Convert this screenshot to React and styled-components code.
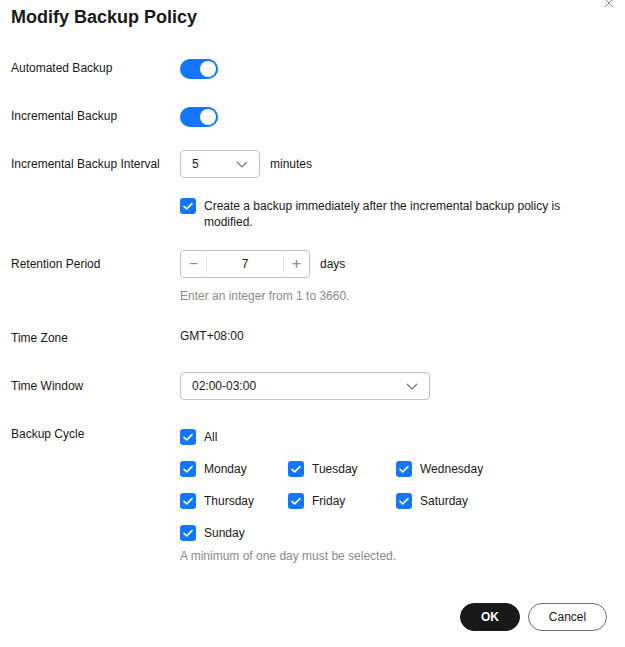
import React, { useState } from 'react';
import styled, { createGlobalStyle } from 'styled-components';

const GlobalStyle = createGlobalStyle`
  * { box-sizing: border-box; }
  body {
    margin: 0;
    background: #fff;
    font-family: "Liberation Sans", Arial, sans-serif;
    color: #191919;
  }
`;

const Dialog = styled.div`
  position: relative;
  width: 625px;
  height: 647px;
  padding: 5px 18px 0 11px;
  background: #fff;
  overflow: hidden;
`;

const Title = styled.h2`
  margin: 0;
  font-size: 18px;
  line-height: 24px;
  font-weight: 700;
  color: #191919;
`;

const Close = styled.button`
  position: absolute;
  top: -3px;
  right: 10px;
  width: 12px;
  height: 12px;
  padding: 0;
  border: 0;
  background: none;
  color: #8a8a8a;
  display: flex;
`;

const Form = styled.div`
  display: flex;
  flex-direction: column;
`;

const Row = styled.div`
  display: flex;
  align-items: flex-start;
  margin-top: ${({ $mt }) => $mt}px;
`;

const Label = styled.div`
  width: 169px;
  flex-shrink: 0;
  font-size: 12px;
  line-height: ${({ $lh }) => $lh || 28}px;
  color: #191919;
`;

const Control = styled.div`
  display: flex;
  flex-direction: column;
  align-items: flex-start;
`;

const Inline = styled.div`
  display: flex;
  align-items: center;
  gap: 10px;
  min-height: 28px;
  font-size: 12px;
`;

const Value = styled.span`
  font-size: 12px;
  line-height: 28px;
  margin-top: -2px;
`;

const Hint = styled.div`
  font-size: 12px;
  line-height: 18px;
  color: #8a8a8a;
  margin-top: ${({ $mt }) => $mt}px;
`;

const SwitchTrack = styled.button`
  position: relative;
  width: 38px;
  height: 20px;
  margin-top: 5px;
  padding: 0;
  border: 0;
  border-radius: 10px;
  background: ${({ $on }) => ($on ? '#1476ff' : '#c2c2c2')};
  cursor: pointer;

  &::after {
    content: '';
    position: absolute;
    top: 2px;
    left: ${({ $on }) => ($on ? '20px' : '2px')};
    width: 16px;
    height: 16px;
    border-radius: 50%;
    background: #fff;
  }
`;

const SelectBox = styled.div`
  display: flex;
  align-items: center;
  justify-content: space-between;
  width: ${({ $w }) => $w}px;
  height: 28px;
  padding: 0 11px 0 11px;
  border: 1px solid #c2c2c2;
  border-radius: 4px;
  font-size: 12px;
  color: #191919;
  background: #fff;
`;

const Chevron = () => (
  <svg width="12" height="7" viewBox="0 0 12 7" fill="none">
    <path d="M1 1l5 5 5-5" stroke="#6e6e6e" strokeWidth="1.1" />
  </svg>
);

const Stepper = styled.div`
  display: flex;
  align-items: center;
  width: 130px;
  height: 28px;
  border: 1px solid #c2c2c2;
  border-radius: 4px;
`;

const StepButton = styled.button`
  width: 25px;
  height: 100%;
  padding: 0;
  border: 0;
  background: none;
  color: #8a8a8a;
  font-size: 16px;
  font-family: inherit;
  display: flex;
  align-items: center;
  justify-content: center;
`;

const StepDivider = styled.span`
  width: 1px;
  height: 18px;
  background: #e3e3e3;
`;

const StepValue = styled.div`
  flex: 1;
  text-align: center;
  font-size: 12px;
`;

const CheckItem = styled.label`
  display: flex;
  align-items: ${({ $top }) => ($top ? 'flex-start' : 'center')};
  gap: 8px;
  min-height: ${({ $top }) => ($top ? 'auto' : '24px')};
  font-size: 12px;
  line-height: 16px;
  color: #191919;
  cursor: pointer;
`;

const Box = styled.span`
  flex-shrink: 0;
  width: 16px;
  height: 16px;
  border-radius: 3px;
  background: #1476ff;
  display: flex;
  align-items: center;
  justify-content: center;
`;

const CheckText = styled.span`
  max-width: 380px;
`;

const Check = ({ children, top }) => (
  <CheckItem $top={top}>
    <Box>
      <svg width="16" height="16" viewBox="0 0 16 16" fill="none">
        <path d="M4 8.3l2.7 2.6L12 5.6" stroke="#fff" strokeWidth="1.6" strokeLinecap="round" strokeLinejoin="round" />
      </svg>
    </Box>
    {children && <CheckText>{children}</CheckText>}
  </CheckItem>
);

const DayGrid = styled.div`
  display: grid;
  grid-template-columns: repeat(3, 108px);
  row-gap: 8px;
`;

const FullCell = styled.div`
  grid-column: 1 / -1;
`;

const Footer = styled.div`
  display: flex;
  justify-content: flex-end;
  gap: 8px;
  margin-top: 38px;
`;

const Button = styled.button`
  height: 28px;
  min-width: ${({ $w }) => $w}px;
  padding: 0 16px;
  border-radius: 14px;
  border: 1px solid ${({ $primary }) => ($primary ? '#191919' : '#6e6e6e')};
  background: ${({ $primary }) => ($primary ? '#191919' : '#fff')};
  color: ${({ $primary }) => ($primary ? '#fff' : '#191919')};
  font-family: inherit;
  font-size: 12px;
  font-weight: ${({ $primary }) => ($primary ? 700 : 400)};
  cursor: pointer;
`;

const days = [
  ['Monday', 'Tuesday', 'Wednesday'],
  ['Thursday', 'Friday', 'Saturday'],
  ['Sunday'],
];

export default function App() {
  const [auto, setAuto] = useState(true);
  const [incr, setIncr] = useState(true);

  return (
    <>
      <GlobalStyle />
      <Dialog>
        <Title>Modify Backup Policy</Title>
        <Close aria-label="Close">
          <svg width="12" height="12" viewBox="0 0 12 12" fill="none">
            <path d="M2 2l8 8M10 2l-8 8" stroke="currentColor" strokeWidth="1" />
          </svg>
        </Close>

        <Form>
          <Row $mt={25}>
            <Label>Automated Backup</Label>
            <SwitchTrack $on={auto} onClick={() => setAuto(!auto)} />
          </Row>

          <Row $mt={20}>
            <Label>Incremental Backup</Label>
            <SwitchTrack $on={incr} onClick={() => setIncr(!incr)} />
          </Row>

          <Row $mt={20}>
            <Label>Incremental Backup Interval</Label>
            <Control>
              <Inline>
                <SelectBox $w={80}>
                  <span>5</span>
                  <Chevron />
                </SelectBox>
                <span>minutes</span>
              </Inline>
              <div style={{ height: 20 }} />
              <Check top>
                Create a backup immediately after the incremental backup policy is modified.
              </Check>
            </Control>
          </Row>

          <Row $mt={20}>
            <Label>Retention Period</Label>
            <Control>
              <Inline>
                <Stepper>
                  <StepButton>−</StepButton>
                  <StepDivider />
                  <StepValue>7</StepValue>
                  <StepDivider />
                  <StepButton>+</StepButton>
                </Stepper>
                <span>days</span>
              </Inline>
              <Hint $mt={9}>Enter an integer from 1 to 3660.</Hint>
            </Control>
          </Row>

          <Row $mt={19}>
            <Label>Time Zone</Label>
            <Value>GMT+08:00</Value>
          </Row>

          <Row $mt={20}>
            <Label>Time Window</Label>
            <SelectBox $w={250}>
              <span>02:00-03:00</span>
              <Chevron />
            </SelectBox>
          </Row>

          <Row $mt={25}>
            <Label $lh={18}>Backup Cycle</Label>
            <Control>
              <DayGrid>
                <FullCell>
                  <Check>All</Check>
                </FullCell>
                {days.flat().map((d) => (
                  <Check key={d}>{d}</Check>
                ))}
              </DayGrid>
              <Hint $mt={2}>A minimum of one day must be selected.</Hint>
            </Control>
          </Row>
        </Form>

        <Footer>
          <Button $primary $w={60}>OK</Button>
          <Button $w={79}>Cancel</Button>
        </Footer>
      </Dialog>
    </>
  );
}
